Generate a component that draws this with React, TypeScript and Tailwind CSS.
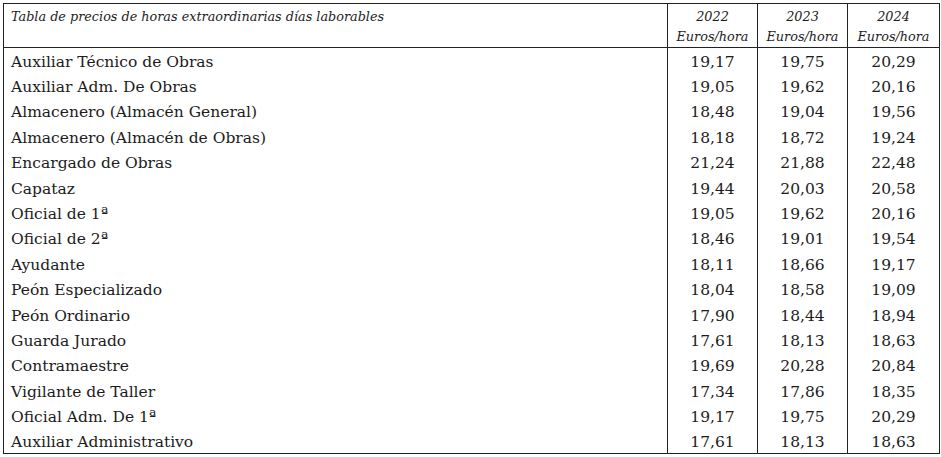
import React from 'react';

const ROWS: [string, string, string, string][] = [
  ['Auxiliar Técnico de Obras', '19,17', '19,75', '20,29'],
  ['Auxiliar Adm. De Obras', '19,05', '19,62', '20,16'],
  ['Almacenero (Almacén General)', '18,48', '19,04', '19,56'],
  ['Almacenero (Almacén de Obras)', '18,18', '18,72', '19,24'],
  ['Encargado de Obras', '21,24', '21,88', '22,48'],
  ['Capataz', '19,44', '20,03', '20,58'],
  ['Oficial de 1ª', '19,05', '19,62', '20,16'],
  ['Oficial de 2ª', '18,46', '19,01', '19,54'],
  ['Ayudante', '18,11', '18,66', '19,17'],
  ['Peón Especializado', '18,04', '18,58', '19,09'],
  ['Peón Ordinario', '17,90', '18,44', '18,94'],
  ['Guarda Jurado', '17,61', '18,13', '18,63'],
  ['Contramaestre', '19,69', '20,28', '20,84'],
  ['Vigilante de Taller', '17,34', '17,86', '18,35'],
  ['Oficial Adm. De 1ª', '19,17', '19,75', '20,29'],
  ['Auxiliar Administrativo', '17,61', '18,13', '18,63'],
];

const YEARS = ['2022', '2023', '2024'];

export default function App() {
  return (
    <div className="w-[941px] h-[457px] bg-white pt-[3px] pl-[3px] font-['DejaVu_Serif',serif] text-[#1c1c1c]">
      <table className="w-[936px] border-collapse table-fixed border border-[#222] font-['DejaVu_Serif',serif]">
        <colgroup>
          <col className="w-[664px]" />
          <col className="w-[90px]" />
          <col className="w-[90px]" />
          <col className="w-[92px]" />
        </colgroup>
        <thead>
          <tr className="h-[41px] border-b border-[#222]">
            <th className="align-top text-left font-normal italic text-[12.8px] leading-[20px] pl-[7px] pt-[3px]">
              Tabla de precios de horas extraordinarias días laborables
            </th>
            {YEARS.map(y => (
              <th key={y} className="align-top font-normal italic text-[12.8px] leading-[20px] pt-[3px] border-l border-[#222]">
                {y}
                <br />
                Euros/hora
              </th>
            ))}
          </tr>
        </thead>
        <tbody>
          {ROWS.map(([name, a, b, c], i) => (
            <tr key={i} className="h-[25.4px]">
              <td className="pl-[7px] pt-[3px] text-[15.5px] leading-[20px] whitespace-nowrap">{name}</td>
              {[a, b, c].map((v, j) => (
                <td key={j} className="pt-[3px] text-center text-[15.5px] leading-[20px] border-l border-[#222]">
                  {v}
                </td>
              ))}
            </tr>
          ))}
        </tbody>
      </table>
    </div>
  );
}
